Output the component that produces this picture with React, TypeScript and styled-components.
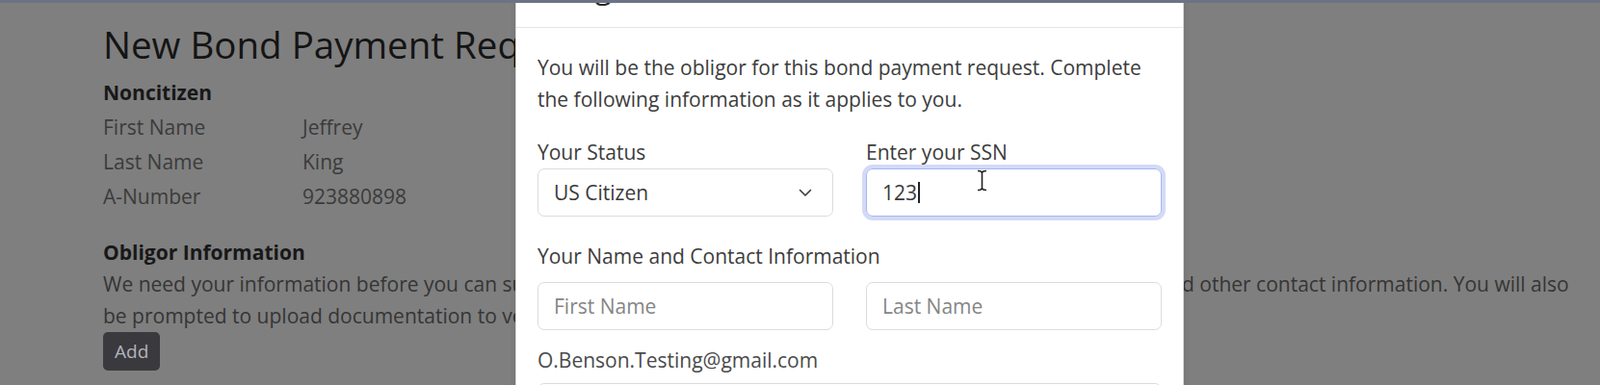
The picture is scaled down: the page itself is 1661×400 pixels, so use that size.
import styled, { createGlobalStyle } from "styled-components";

const GlobalStyle = createGlobalStyle`
  * { box-sizing: border-box; }
  html, body {
    margin: 0;
    padding: 0;
    height: 400px;
    overflow: hidden;
    background: #7f7f7f;
  }
  body {
    font-family: "Open Sans", "Liberation Sans", sans-serif;
    font-size: 21px;
  }
`;

const Page = styled.div`
    position: relative;
    height: 400px;
    overflow: hidden;
    background: #7f7f7f;
    border-top: 3px solid #6b7384;
`;

const Container = styled.main`
    padding: 21px 0 0 107px;
`;

const Title = styled.h3`
    margin: 0 0 10px;
    font-size: 38.5px;
    line-height: 44px;
    font-weight: 400;
    color: #141414;
    white-space: nowrap;
`;

const SectionTitle = styled.div<{ $gap?: number }>`
    margin-top: ${(p) => p.$gap ?? 0}px;
    font-weight: 700;
    line-height: 36px;
    color: #181818;
`;

const DetailGrid = styled.dl`
    margin: 0;
    display: grid;
    grid-template-columns: 207px auto;
    line-height: 36px;
    color: #3b3b3b;
    dt, dd { margin: 0; }
`;

const Paragraph = styled.p`
    margin: 0;
    line-height: 33px;
    color: #353535;
    white-space: nowrap;
`;

const DarkButton = styled.button`
    height: 40px;
    padding: 0 12px;
    border: none;
    border-radius: 5px;
    background: #3a3a3e;
    color: #b4b4bc;
    font-family: inherit;
    font-size: 19px;
`;

/* modal lies over the dimmed page */
const Modal = styled.div`
    position: absolute;
    top: -58px;
    left: 535px;
    width: 694px;
    background: #fff;
    border: 1px solid #d6d6d6;
    border-radius: 8px;
    box-shadow: 0 0 6px rgba(0, 0, 0, 0.15);
`;

const ModalHeader = styled.div`
    padding: 22px;
    border-bottom: 1px solid #e6e6e6;
`;

const ModalTitle = styled.h4`
    margin: 0;
    font-size: 31.5px;
    line-height: 38px;
    font-weight: 500;
    color: #2a2a2a;
`;

const ModalBody = styled.div`
    padding: 25px 22px 22px;
    color: #3c3c3c;
`;

const Intro = styled.p`
    margin: 0 0 23px;
    line-height: 33px;
`;

const Row = styled.div`
    display: grid;
    grid-template-columns: 1fr 1fr;
    column-gap: 34px;
`;

const Label = styled.div<{ $below?: number; $above?: number }>`
    margin-top: ${(p) => p.$above ?? 0}px;
    margin-bottom: ${(p) => p.$below ?? 2}px;
    line-height: 30px;
    color: #3c3c3c;
`;

const Control = styled.div<{ $focused?: boolean }>`
    position: relative;
    height: 50px;
    padding: 0 20px 0 16px;
    display: flex;
    align-items: center;
    justify-content: space-between;
    border: 1px solid ${(p) => (p.$focused ? "#a7b6ee" : "#dcdcdc")};
    border-radius: 7px;
    box-shadow: ${(p) => (p.$focused ? "0 0 0 4px #d3daf7" : "none")};
    color: #3a3a3a;
`;

const TextInput = styled.input<{ $top?: number }>`
    width: 100%;
    height: 50px;
    margin-top: ${(p) => p.$top ?? 0}px;
    padding: 0 16px;
    border: 1px solid #dcdcdc;
    border-radius: 7px;
    font-family: inherit;
    font-size: 21px;
    color: #3a3a3a;
    outline: none;
    &::placeholder { color: #858585; }
`;

const Typed = styled.span`
    display: flex;
    align-items: center;
`;

const Caret = styled.span`
    display: inline-block;
    width: 2px;
    height: 22px;
    margin-left: 1px;
    background: #222;
`;

const IBeam = styled.svg`
    position: absolute;
    left: 114px;
    top: 0;
`;

const Email = styled.div`
    margin-top: 16px;
    line-height: 30px;
    color: #4a4a4a;
`;

export default function App() {
  return (
    <>
      <GlobalStyle />
      <Page>
        <Container>
          <Title>New Bond Payment Request</Title>
          <SectionTitle>Noncitizen</SectionTitle>
          <DetailGrid>
            <dt>First Name</dt><dd>Jeffrey</dd>
            <dt>Last Name</dt><dd>King</dd>
            <dt>A-Number</dt><dd>923880898</dd>
          </DetailGrid>

          <SectionTitle $gap={24} style={{ lineHeight: "33px" }}>Obligor Information</SectionTitle>
          <Paragraph>
            We need your information before you can submit this payment request. We need your address, phone number, and other contact information. You will also
            <br />
            be prompted to upload documentation to verify your identity.
          </Paragraph>
          <DarkButton>Add</DarkButton>
        </Container>

        <Modal>
          <ModalHeader>
            <ModalTitle>Obligor Information</ModalTitle>
          </ModalHeader>
          <ModalBody>
            <Intro>
              You will be the obligor for this bond payment request. Complete the following information as it applies to you.
            </Intro>

            <Row>
              <div>
                <Label>Your Status</Label>
                <Control>
                  <span>US Citizen</span>
                  <svg width="16" height="16" viewBox="0 0 16 16">
                    <path d="M2.5 5.5l5.5 5.5 5.5-5.5" fill="none" stroke="#3a3a3a" strokeWidth="1.6" strokeLinecap="round" strokeLinejoin="round" />
                  </svg>
                </Control>
              </div>
              <div>
                <Label>Enter your SSN</Label>
                <Control $focused>
                  <Typed>123<Caret /></Typed>
                  <IBeam width="11" height="23" viewBox="0 0 11 23">
                    <path d="M1 1.5c2 0 4.5 0 4.5 2.5c0-2.5 2.5-2.5 4.5-2.5M5.5 4v15M1 21.5c2 0 4.5 0 4.5-2.5c0 2.5 2.5 2.5 4.5 2.5" fill="none" stroke="#222" strokeWidth="1.6" />
                  </IBeam>
                </Control>
              </div>
            </Row>

            <Label $above={26} $below={12}>Your Name and Contact Information</Label>
            <Row>
              <TextInput placeholder="First Name" readOnly />
              <TextInput placeholder="Last Name" readOnly />
            </Row>

            <Email>O.Benson.Testing@gmail.com</Email>
            <TextInput $top={9} placeholder="Phone Number" readOnly />
          </ModalBody>
        </Modal>
      </Page>
    </>
  );
}
